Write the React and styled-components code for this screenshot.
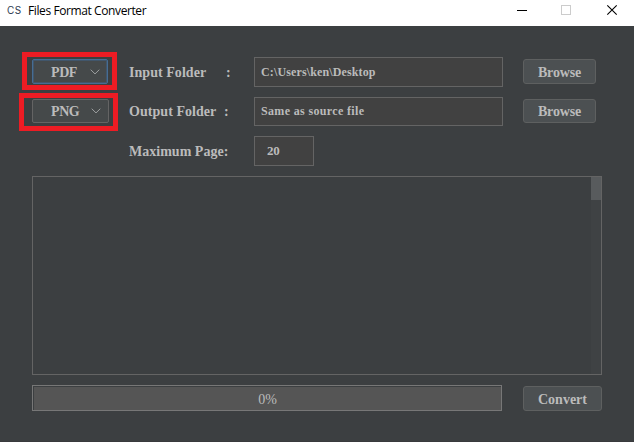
import React from "react";
import styled, { createGlobalStyle } from "styled-components";

const Global = createGlobalStyle`
  * { box-sizing: border-box; }
  body { margin: 0; background: #3c3f41; overflow: hidden; }
`;

const Window = styled.div`
  width: 634px;
  height: 442px;
  display: flex;
  flex-direction: column;
  background: #3c3f41;
  border-bottom: 1px solid #393a3d;
  color: #bbbbbb;
  font-family: "Liberation Serif", serif;
  font-weight: bold;
  font-size: 14px;
`;

const TitleBar = styled.header`
  height: 26px;
  flex: none;
  display: flex;
  align-items: flex-start;
  background: #fff;
  color: #000;
  font-family: "Open Sans", sans-serif;
  font-weight: 400;
`;

const Logo = styled.span`
  width: 28px;
  padding-left: 7px;
  font: 10px/20px "Inter", sans-serif;
  letter-spacing: 0.4px;
  color: #2d3a4e;
`;

const Title = styled.span`
  flex: 1;
  font-size: 12px;
  line-height: 22px;
  letter-spacing: ${(p) => p.$spacing};
`;

const WindowControls = styled.svg`
  width: 117px;
  height: 26px;
  flex: none;
`;

const Form = styled.main`
  padding: 31px 32px 0;
  display: flex;
  flex-direction: column;
  gap: 10px;
`;

const Row = styled.div`
  display: flex;
  height: ${(p) => p.$height}px;
`;

const FormatCell = styled.div`
  width: 97px;
  flex: none;
  padding-top: 2px;
`;

const Combo = styled.div`
  position: relative;
  width: ${(p) => p.$width}px;
  height: ${(p) => p.$height}px;
  border: 1px solid ${(p) => (p.$focused ? "#466d94" : "#646464")};
  box-shadow: ${(p) => (p.$focused ? "inset 0 0 0 1px #41566b" : "none")};
  border-radius: 2px;
  background: #45494a;
  display: flex;
  align-items: center;
  padding: 2px 0 0 18px;
`;

const ComboText = styled.span`
  width: ${(p) => p.$width}px;
  letter-spacing: -0.4px;
`;

const Chevron = styled.svg`
  width: 10px;
  height: 6px;
  margin-bottom: 2px;
`;

const Highlight = styled.div`
  position: absolute;
  inset: ${(p) => p.$inset};
  border: 5px solid #ed1c24;
`;

const Label = styled.div`
  width: 125px;
  flex: none;
  display: flex;
  line-height: ${(p) => p.$line}px;
`;

const LabelText = styled.span`
  width: ${(p) => p.$width}px;
  white-space: nowrap;
  letter-spacing: ${(p) => p.$spacing};
`;

const Field = styled.div`
  width: ${(p) => p.$width}px;
  border: 1px solid #646464;
  background: #414141;
  padding-left: ${(p) => p.$pad}px;
  font-size: ${(p) => p.$size}px;
  line-height: ${(p) => p.$line || 28}px;
  letter-spacing: ${(p) => p.$spacing};
`;

const Button = styled.button`
  width: ${(p) => p.$width}px;
  height: ${(p) => p.$height}px;
  margin: ${(p) => p.$top}px 0 0 auto;
  margin-right: ${(p) => p.$right || 0}px;
  padding: 2px 0 0;
  border: 1px solid #5e6060;
  border-radius: 3px;
  background: #4c5052;
  color: inherit;
  font: bold 14px "Liberation Serif", serif;
  letter-spacing: ${(p) => p.$spacing};
`;

const LogArea = styled.section`
  height: 199px;
  border: 1px solid #646464;
  display: flex;
  justify-content: flex-end;
`;

const ScrollTrack = styled.div`
  width: 10px;
  background: #3f4244;
`;

const ScrollThumb = styled.div`
  height: 23px;
  background: #585b5d;
`;

const Progress = styled.div`
  width: 470px;
  height: 26px;
  border: 1px solid #777777;
  padding: 1px 0 0 1px;
`;

const ProgressFill = styled.div`
  height: 100%;
  background: #555555;
  text-align: center;
  font-weight: 400;
  line-height: 25px;
`;

function Arrow() {
  return (
    <Chevron viewBox="0 0 10 6">
      <path d="M0.7 0.7L5 4.9L9.3 0.7" fill="none" stroke="#9da0a1" strokeWidth="1" />
    </Chevron>
  );
}

export default function App() {
  return (
    <Window>
      <Global />
      <TitleBar>
        <Logo>CS</Logo>
        <Title $spacing="-0.4px">Files Format Converter</Title>
        <WindowControls viewBox="0 0 117 26">
          <path d="M0 10.5H10" stroke="#000" />
          <rect x="44.5" y="5.5" width="9" height="9" fill="none" stroke="#ccc" />
          <path d="M90.3 5.3L99.7 14.7M99.7 5.3L90.3 14.7" stroke="#000" strokeWidth="1.1" />
        </WindowControls>
      </TitleBar>
      <Form>
        <Row $height={30}>
          <FormatCell>
            <Combo $width={76} $height={25} $focused>
              <ComboText $width={39}>PDF</ComboText>
              <Arrow />
              <Highlight $inset="-8px -10px -7px -11px" />
            </Combo>
          </FormatCell>
          <Label $line={31}>
            <LabelText $width={97} $spacing="0.05px">Input Folder</LabelText>:
          </Label>
          <Field $width={249} $pad={6} $size={12} $spacing="0.13px">C:\Users\ken\Desktop</Field>
          <Button $width={73} $height={25} $top={2} $right={6} $spacing="-0.15px">Browse</Button>
        </Row>
        <Row $height={29}>
          <FormatCell>
            <Combo $width={77} $height={24}>
              <ComboText $width={40}>PNG</ComboText>
              <Arrow />
              <Highlight $inset="-7px -10px -9px -14px" />
            </Combo>
          </FormatCell>
          <Label $line={30}>
            <LabelText $width={95} $spacing="0.05px">Output Folder</LabelText>:
          </Label>
          <Field $width={249} $pad={6} $size={12} $line={27} $spacing="0.35px">Same as source file</Field>
          <Button $width={73} $height={24} $top={2} $right={6} $spacing="-0.15px">Browse</Button>
        </Row>
        <Row $height={30}>
          <FormatCell />
          <Label $line={31}>
            <LabelText $width={97} $spacing="0.02px">Maximum Page:</LabelText>
          </Label>
          <Field $width={60} $pad={12} $size={13} $spacing="-0.2px">20</Field>
        </Row>
        <LogArea>
          <ScrollTrack>
            <ScrollThumb />
          </ScrollTrack>
        </LogArea>
        <Row $height={26}>
          <Progress>
            <ProgressFill>0%</ProgressFill>
          </Progress>
          <Button $width={79} $height={25} $top={1} $spacing="0">Convert</Button>
        </Row>
      </Form>
    </Window>
  );
}
